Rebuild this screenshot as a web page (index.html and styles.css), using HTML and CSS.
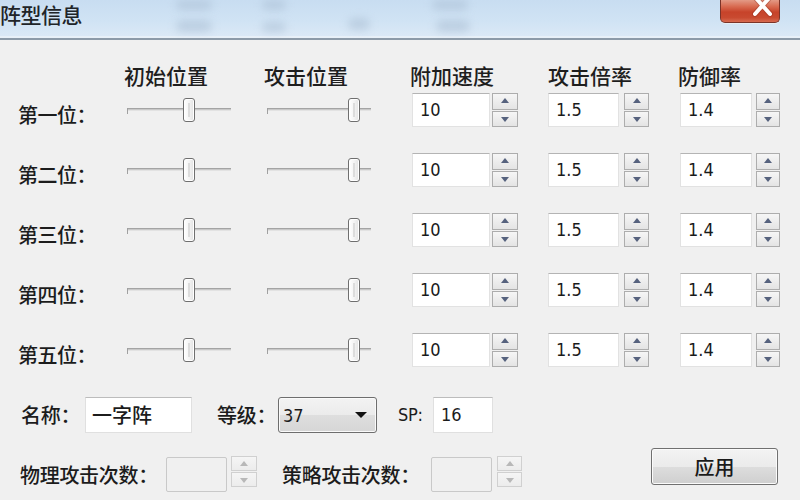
FILE: index.html
```html
<!DOCTYPE html>
<html lang="zh-CN">
<head>
<meta charset="utf-8">
<title>阵型信息</title>
<link rel="stylesheet" href="styles.css">
</head>
<body>
<div class="titlebar">
  <span class="blob b1"></span><span class="blob b2"></span><span class="blob b3"></span><span class="blob b4"></span><span class="blob b5"></span><span class="blob b6"></span><span class="blob b7"></span>
  <span class="title">阵型信息</span>
  <div class="close">
    <svg width="60" height="23" viewBox="0 0 60 23"><path d="M34 -3 L49 14 M49 -3 L34 14" stroke="#8a2e20" stroke-width="6" stroke-linecap="round" opacity="0.35"/><path d="M34 -3 L49 14 M49 -3 L34 14" stroke="#ffffff" stroke-width="4" stroke-linecap="round"/></svg>
  </div>
</div>
<div class="content">
  <div class="row head">
    <div class="c-label"></div>
    <div class="c-s1">初始位置</div>
    <div class="c-s2">攻击位置</div>
    <div class="c-n1">附加速度</div>
    <div class="c-n2">攻击倍率</div>
    <div class="c-n3">防御率</div>
  </div>
  <div class="rows">
    <div class="row">
      <div class="c-label lbl">第一位：</div>
      <div class="c-s1"><div class="slider"><div class="track"></div><div class="thumb t60"></div></div></div>
      <div class="c-s2"><div class="slider"><div class="track"></div><div class="thumb t84"></div></div></div>
      <div class="c-n1 spin"><div class="num">10</div><div class="arrows"><div class="ab up"></div><div class="ab down"></div></div></div>
      <div class="c-n2 spin"><div class="num">1.5</div><div class="arrows"><div class="ab up"></div><div class="ab down"></div></div></div>
      <div class="c-n3 spin"><div class="num">1.4</div><div class="arrows"><div class="ab up"></div><div class="ab down"></div></div></div>
    </div>
    <div class="row">
      <div class="c-label lbl">第二位：</div>
      <div class="c-s1"><div class="slider"><div class="track"></div><div class="thumb t60"></div></div></div>
      <div class="c-s2"><div class="slider"><div class="track"></div><div class="thumb t84"></div></div></div>
      <div class="c-n1 spin"><div class="num">10</div><div class="arrows"><div class="ab up"></div><div class="ab down"></div></div></div>
      <div class="c-n2 spin"><div class="num">1.5</div><div class="arrows"><div class="ab up"></div><div class="ab down"></div></div></div>
      <div class="c-n3 spin"><div class="num">1.4</div><div class="arrows"><div class="ab up"></div><div class="ab down"></div></div></div>
    </div>
    <div class="row">
      <div class="c-label lbl">第三位：</div>
      <div class="c-s1"><div class="slider"><div class="track"></div><div class="thumb t60"></div></div></div>
      <div class="c-s2"><div class="slider"><div class="track"></div><div class="thumb t84"></div></div></div>
      <div class="c-n1 spin"><div class="num">10</div><div class="arrows"><div class="ab up"></div><div class="ab down"></div></div></div>
      <div class="c-n2 spin"><div class="num">1.5</div><div class="arrows"><div class="ab up"></div><div class="ab down"></div></div></div>
      <div class="c-n3 spin"><div class="num">1.4</div><div class="arrows"><div class="ab up"></div><div class="ab down"></div></div></div>
    </div>
    <div class="row">
      <div class="c-label lbl">第四位：</div>
      <div class="c-s1"><div class="slider"><div class="track"></div><div class="thumb t60"></div></div></div>
      <div class="c-s2"><div class="slider"><div class="track"></div><div class="thumb t84"></div></div></div>
      <div class="c-n1 spin"><div class="num">10</div><div class="arrows"><div class="ab up"></div><div class="ab down"></div></div></div>
      <div class="c-n2 spin"><div class="num">1.5</div><div class="arrows"><div class="ab up"></div><div class="ab down"></div></div></div>
      <div class="c-n3 spin"><div class="num">1.4</div><div class="arrows"><div class="ab up"></div><div class="ab down"></div></div></div>
    </div>
    <div class="row">
      <div class="c-label lbl">第五位：</div>
      <div class="c-s1"><div class="slider"><div class="track"></div><div class="thumb t60"></div></div></div>
      <div class="c-s2"><div class="slider"><div class="track"></div><div class="thumb t84"></div></div></div>
      <div class="c-n1 spin"><div class="num">10</div><div class="arrows"><div class="ab up"></div><div class="ab down"></div></div></div>
      <div class="c-n2 spin"><div class="num">1.5</div><div class="arrows"><div class="ab up"></div><div class="ab down"></div></div></div>
      <div class="c-n3 spin"><div class="num">1.4</div><div class="arrows"><div class="ab up"></div><div class="ab down"></div></div></div>
    </div>
  </div>

  <div class="bottom">
    <div class="brow r1">
      <span class="bl w-name">名称：</span>
      <div class="field f-name">一字阵</div>
      <span class="bl w-level">等级：</span>
      <div class="select"><span class="latin">37</span><span class="caret"></span></div>
      <span class="bl latin w-sp">SP:</span>
      <div class="field f-sp latin">16</div>
    </div>
    <div class="brow r2">
      <span class="bl w-phys">物理攻击次数：</span>
      <div class="field disabled"></div>
      <div class="arrows dis a1"><div class="ab up"></div><div class="ab down"></div></div>
      <span class="bl w-strat">策略攻击次数：</span>
      <div class="field disabled"></div>
      <div class="arrows dis a2"><div class="ab up"></div><div class="ab down"></div></div>
      <button class="apply">应用</button>
    </div>
  </div>
</div>
</body>
</html>
```

FILE: styles.css
```css
* { box-sizing: border-box; }
html, body { margin: 0; padding: 0; }
body {
  width: 800px;
  height: 500px;
  overflow: hidden;
  background: #f0f0f0;
  font-family: "Noto Sans CJK SC", "Noto Sans", sans-serif;
  font-weight: 500;
  color: #1c1c1c;
}

/* Title bar */
.titlebar {
  position: relative;
  height: 40px;
  background: linear-gradient(#c8ddf1 0%, #d0e3f4 55%, #dce9f6 100%);
  border-bottom: 2px solid #8c9aa8;
  box-shadow: inset 0 -2px 0 #e8f0f8;
  display: flex;
  align-items: flex-start;
  justify-content: space-between;
  padding-right: 20px;
  overflow: hidden;
}
.title {
  position: relative;
  z-index: 1;
  font-size: 21px;
  line-height: 28px;
  color: #202428;
  letter-spacing: -0.5px;
}
.blob {
  position: absolute;
  height: 10px;
  border-radius: 6px;
  background: #a9bdd2;
  filter: blur(4px);
  opacity: 0.55;
}
.b1 { left: 176px; top: 0px; width: 36px; }
.b2 { left: 176px; top: 20px; width: 36px; height: 12px; }
.b3 { left: 262px; top: 0px; width: 24px; }
.b4 { left: 262px; top: 22px; width: 24px; }
.b5 { left: 348px; top: 18px; width: 22px; height: 12px; }
.b6 { left: 432px; top: 0px; width: 36px; }
.b7 { left: 436px; top: 20px; width: 34px; height: 12px; }

.close {
  position: relative;
  z-index: 1;
  width: 60px;
  height: 23px;
  border: 1px solid #7b3328;
  border-top: none;
  border-radius: 0 0 5px 5px;
  background: linear-gradient(#e39a86 0%, #d86a50 30%, #c7432a 55%, #c94a30 80%, #d76a50 100%);
  box-shadow: 0 1px 0 #e8eef4;
  overflow: hidden;
}
.close svg { display: block; }

/* Content */
.content {
  padding: 23px 0 0 18px;
}
.row {
  display: flex;
  align-items: center;
}
.head {
  height: 24px;
  margin-bottom: 1px;
  font-size: 21px;
  line-height: 24px;
  color: #1e1e1e;
}
.rows {
  display: flex;
  flex-direction: column;
  gap: 16px;
}
.rows .row { height: 44px; }

.c-label { width: 106px; }
.c-s1 { width: 140px; }
.c-s2 { width: 146px; }
.c-n1 { width: 138px; }
.c-n2 { width: 130px; }
.c-n3 { width: 120px; }

.lbl {
  font-size: 20px;
  padding-top: 10px;
  line-height: 28px;
  letter-spacing: -0.5px;
}

/* Slider */
.slider {
  position: relative;
  margin-left: 3px;
  width: 104px;
  height: 26px;
}
.track {
  position: absolute;
  left: 0;
  right: 0;
  top: 11px;
  height: 3px;
  border-top: 1px solid #a4a4a4;
  border-bottom: 1px solid #e2e2e2;
  background: #c8c8c8;
}
.track::before {
  content: "";
  position: absolute;
  left: 0;
  top: -1px;
  width: 1px;
  height: 6px;
  background: #a0a0a0;
}
.thumb {
  position: absolute;
  top: 1px;
  width: 12px;
  height: 24px;
  border: 1px solid #6f6f6f;
  border-radius: 3px;
  background: linear-gradient(90deg, #ffffff 0%, #f4f4f4 50%, #e2e2e2 100%);
  box-shadow: inset 0 0 0 1px #ffffff;
}
.thumb::after {
  content: "";
  position: absolute;
  left: 4px;
  top: 4px;
  width: 2px;
  height: 14px;
  background: #dcdcdc;
}
.t60 { left: 56px; }
.t84 { left: 81px; }

/* Spin boxes */
.spin { display: flex; align-items: center; }
.num {
  height: 34px;
  margin-left: 2px;
  padding-left: 7px;
  background: #ffffff;
  border: 1px solid #e2e2e2;
  border-top-color: #b4b4b4;
  font-family: "DejaVu Sans Condensed", "DejaVu Sans", sans-serif;
  font-stretch: condensed;
  font-weight: 400;
  font-size: 18px;
  line-height: 32px;
  color: #1a1a1a;
}
.c-n1 .num { width: 78px; }
.c-n2 .num { width: 71px; margin-left: 0; }
.c-n3 .num { width: 72px; }
.arrows {
  display: flex;
  flex-direction: column;
  gap: 1px;
  width: 26px;
  height: 34px;
}
.c-n1 .arrows { margin-left: 2px; }
.c-n2 .arrows { margin-left: 5px; width: 25px; }
.c-n3 .arrows { margin-left: 4px; width: 24px; }
.ab {
  flex: 1;
  position: relative;
  border: 1px solid #adadad;
  background: linear-gradient(#f6f6f6, #e4e4e4);
}
.ab::after {
  content: "";
  position: absolute;
  left: 50%;
  top: 50%;
  margin-left: -4px;
  border-left: 4px solid transparent;
  border-right: 4px solid transparent;
}
.up::after { margin-top: -3px; border-bottom: 5px solid #56627e; }
.down::after { margin-top: -2px; border-top: 5px solid #56627e; }

/* Bottom area */
.bottom {
  margin-top: 25px;
  padding-left: 3px;
}
.brow {
  display: flex;
  align-items: center;
}
.brow.r1 { height: 36px; }
.brow.r2 { height: 35px; margin-top: 24px; }
.bl {
  font-size: 20px;
  line-height: 28px;
  white-space: nowrap;
  letter-spacing: -0.3px;
}
.latin {
  font-family: "DejaVu Sans Condensed", "DejaVu Sans", sans-serif;
  font-stretch: condensed;
  font-weight: 400;
  font-size: 18px;
}
.w-name { width: 64px; }
.w-level { width: 61px; margin-left: 25px; }
.w-sp { width: 35px; margin-left: 21px; }
.w-phys { width: 146px; margin-left: -1px; }
.w-strat { width: 149px; margin-left: 25px; }

.field {
  height: 36px;
  background: #ffffff;
  border: 1px solid #e0e0e0;
  border-top-color: #bcbcbc;
  line-height: 34px;
  padding-left: 6px;
}
.f-name { width: 107px; font-size: 20px; }
.f-sp { width: 60px; padding-left: 7px; }
.field.disabled {
  width: 61px;
  height: 35px;
  background: #f0f0f0;
  border: 1px solid #c9c9c9;
  border-radius: 2px;
}
.arrows.dis { height: 31px; align-self: flex-start; margin-top: -1px; }
.arrows.dis .ab { border-color: #d0d0d0; background: linear-gradient(#f5f5f5, #ececec); }
.arrows.dis .up::after { border-bottom-color: #b8b8b8; }
.arrows.dis .down::after { border-top-color: #b8b8b8; }
.a1 { margin-left: 4px; }
.a2 { margin-left: 5px; width: 25px; }

.select {
  width: 99px;
  height: 36px;
  border: 1px solid #6e6e6e;
  border-radius: 3px;
  background: linear-gradient(#f3f3f3 0%, #ebebeb 50%, #dedede 51%, #d6d6d6 100%);
  display: flex;
  align-items: center;
  justify-content: space-between;
  padding: 0 9px 0 4px;
  box-shadow: inset 0 0 0 1px #fafafa;
}
.caret {
  width: 0;
  height: 0;
  border-left: 6px solid transparent;
  border-right: 6px solid transparent;
  border-top: 6px solid #111;
}

.apply {
  margin-left: auto;
  margin-right: 22px;
  margin-bottom: 16px;
  width: 127px;
  height: 37px;
  border: 1px solid #707070;
  border-radius: 3px;
  background: linear-gradient(#f3f3f3 0%, #ebebeb 50%, #dddddd 51%, #cfcfcf 100%);
  box-shadow: inset 0 0 0 1px #fbfbfb;
  font-family: "Noto Sans CJK SC", "Noto Sans", sans-serif;
  font-weight: 500;
  font-size: 20px;
  color: #1a1a1a;
  padding: 0;
}
```
